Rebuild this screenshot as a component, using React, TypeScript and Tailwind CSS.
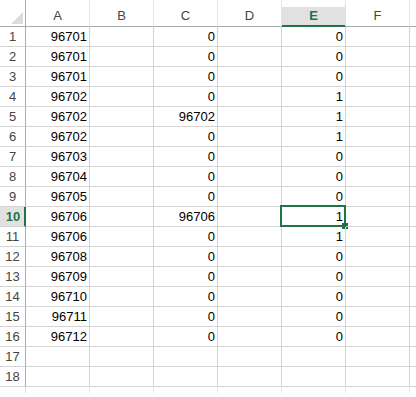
const COLS = ["A", "B", "C", "D", "E", "F"];

const ROWS: [string, string, string][] = [
  ["96701", "0", "0"],
  ["96701", "0", "0"],
  ["96701", "0", "0"],
  ["96702", "0", "1"],
  ["96702", "96702", "1"],
  ["96702", "0", "1"],
  ["96703", "0", "0"],
  ["96704", "0", "0"],
  ["96705", "0", "0"],
  ["96706", "96706", "1"],
  ["96706", "0", "1"],
  ["96708", "0", "0"],
  ["96709", "0", "0"],
  ["96710", "0", "0"],
  ["96711", "0", "0"],
  ["96712", "0", "0"],
  ["", "", ""],
  ["", "", ""],
];

const ACTIVE_ROW = 10;

function Cell({ value, active }: { value?: string; active?: boolean }) {
  return (
    <div className="relative flex h-[20px] items-center justify-end border-r border-b border-[#d4d4d4] pr-[2px]">
      {value}
      {active && (
        <>
          <div className="pointer-events-none absolute -top-[2px] -left-[2px] -right-[1px] -bottom-[1px] border-2 border-[#217346]" />
          <div className="absolute -right-[3px] -bottom-[3px] h-[6px] w-[6px] bg-[#217346]" />
        </>
      )}
    </div>
  );
}

export default function App() {
  return (
    <div
      className="h-[397px] w-[416px] overflow-hidden bg-white text-[13px] text-black"
      style={{ fontFamily: '"Liberation Sans", Arial, sans-serif' }}
    >
      <div className="grid grid-cols-[26px_repeat(6,64px)_1fr]">
        {/* header row */}
        <div className="relative h-[27px] border-r border-b border-[#ababab]">
          <svg className="absolute left-[11px] top-[12px]" width="12" height="12" viewBox="0 0 12 12">
            <polygon points="12,0 12,12 0,12" fill="#dcdcdc" />
          </svg>
        </div>
        {COLS.map((c) =>
          c === "E" ? (
            <div key={c} className="flex h-[27px] items-end border-r border-b border-r-[#e1e1e1] border-b-[#217346]">
              <div className="flex h-[19px] w-full items-center justify-center border-b border-[#217346] bg-[#e1e1e1] font-bold text-[#217346]">
                {c}
              </div>
            </div>
          ) : (
            <div
              key={c}
              className="flex h-[27px] items-end border-r border-b border-r-[#e6e6e6] border-b-[#ababab] text-[#444]"
            >
              <div className="flex h-[20px] w-full items-center justify-center">{c}</div>
            </div>
          )
        )}
        <div className="h-[27px] border-b border-[#ababab]" />

        {ROWS.map((r, i) => {
          const n = i + 1;
          const active = n === ACTIVE_ROW;
          return (
            <div key={n} className="contents">
              {active ? (
                <div className="flex h-[20px] items-center justify-center border-r-2 border-b border-r-[#217346] border-b-[#d4d4d4] bg-[#e1e1e1] pl-[2px] font-bold text-[#217346]">
                  {n}
                </div>
              ) : (
                <div className="flex h-[20px] items-center justify-center border-r border-b border-r-[#ababab] border-b-[#d4d4d4] text-[#444]">
                  {n}
                </div>
              )}
              <Cell value={r[0]} />
              <Cell />
              <Cell value={r[1]} />
              <Cell />
              <Cell value={r[2]} active={active} />
              <Cell />
              <div className="h-[20px] border-b border-[#d4d4d4]" />
            </div>
          );
        })}

        {/* tick marks below the last row */}
        <div className="h-[6px] border-r border-[#e0e0e0]" />
        {COLS.map((c) => (
          <div key={c} className="h-[6px] border-r border-[#e6e6e6]" />
        ))}
        <div />
      </div>
    </div>
  );
}
